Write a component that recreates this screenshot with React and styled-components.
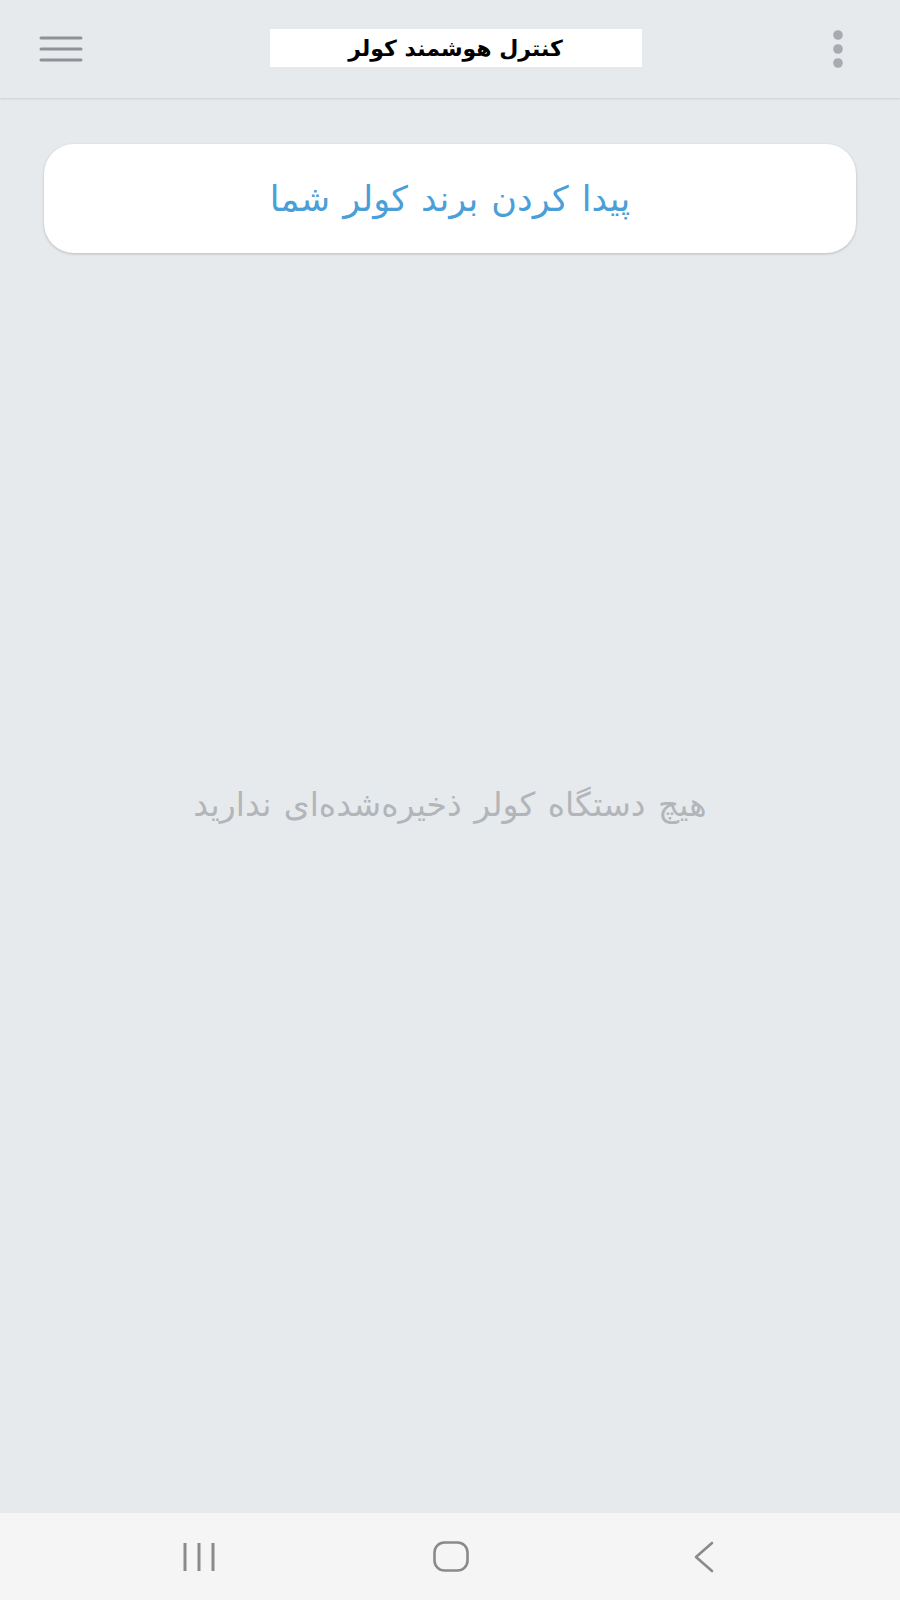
import React from "react";
import styled, { createGlobalStyle } from "styled-components";

//
// page reset
const GlobalStyle = createGlobalStyle`
  html, body {
    margin: 0;
    padding: 0;
  }
  body {
    font-family: "DejaVu Sans", "Noto Sans", sans-serif;
    background: #e7eaed;
  }
`;

const Screen = styled.div`
  width: 100%;
  height: 100vh;
  display: flex;
  flex-direction: column;
  background: #e7eaed;
  overflow: hidden;
`;

//
//          **    top bar  ***
//
const TopBar = styled.header`
  height: 98px;
  flex-shrink: 0;
  display: flex;
  align-items: center;
  justify-content: space-between;
  padding: 0 52px 0 39px;
  background: #e7eaed;
  box-shadow: 0 1px 2px rgba(0, 0, 0, 0.12);
  position: relative;
  z-index: 1;
  box-sizing: border-box;
`;

const IconButton = styled.button`
  border: none;
  background: transparent;
  padding: 0;
  margin: 0;
  width: ${(props) => props.width}px;
  height: 40px;
  display: flex;
  align-items: center;
  justify-content: center;
  cursor: pointer;
`;

const TitleBox = styled.div`
  width: 372px;
  height: 38px;
  margin-top: -2px;
  background: #ffffff;
  display: flex;
  align-items: center;
  justify-content: center;
`;

const Title = styled.h1`
  margin: 0;
  font-size: 22px;
  font-weight: 700;
  color: #000;
  direction: rtl;
`;

//
//          **    content  ***
//
const Content = styled.main`
  flex: 1;
  display: grid;
  grid-template-areas: "stack";
  min-height: 0;
`;

const BrandCard = styled.button`
  grid-area: stack;
  align-self: start;
  margin: 46px 44px 0;
  height: 109px;
  border: none;
  border-radius: 30px;
  background: #ffffff;
  box-shadow: 0 1px 3px rgba(0, 0, 0, 0.2);
  display: flex;
  align-items: center;
  justify-content: center;
  cursor: pointer;
  font-family: inherit;
`;

const CardLabel = styled.span`
  font-size: 35px;
  word-spacing: 2px;
  color: #4a9fd8;
  direction: rtl;
  margin-top: 0;
`;

const EmptyNote = styled.p`
  grid-area: stack;
  align-self: center;
  justify-self: center;
  margin: 0 0 2px;
  font-size: 33px;
  word-spacing: 2px;
  color: #b2b5b9;
  direction: rtl;
`;

//
//          **    system nav  ***
//
const NavBar = styled.nav`
  height: 87px;
  flex-shrink: 0;
  background: #f5f5f5;
  display: grid;
  grid-template-columns: repeat(3, 252px);
  padding: 0 73px;
  align-items: center;
  justify-items: center;
`;

const NavKey = styled.div`
  display: flex;
  align-items: center;
  justify-content: center;
  margin-left: ${(props) => props.shift || 0}px;
`;

const Hamburger = () => (
  <svg width="44" height="28" viewBox="0 0 44 28">
    <g stroke="#8e9196" strokeWidth="3" strokeLinecap="round">
      <line x1="2" y1="3" x2="42" y2="3" />
      <line x1="2" y1="14" x2="42" y2="14" />
      <line x1="2" y1="25" x2="42" y2="25" />
    </g>
  </svg>
);

const MoreDots = () => (
  <svg width="20" height="38" viewBox="0 0 20 38">
    <g fill="#a7aaae">
      <circle cx="10" cy="5" r="4.8" />
      <circle cx="10" cy="19" r="4.8" />
      <circle cx="10" cy="33" r="4.8" />
    </g>
  </svg>
);

const RecentsIcon = () => (
  <svg width="34" height="30" viewBox="0 0 34 30">
    <g stroke="#8a8a8a" strokeWidth="3">
      <line x1="3" y1="1" x2="3" y2="29" />
      <line x1="17" y1="1" x2="17" y2="29" />
      <line x1="31" y1="1" x2="31" y2="29" />
    </g>
  </svg>
);

const HomeIcon = () => (
  <svg width="36" height="31" viewBox="0 0 36 31">
    <rect
      x="1.5"
      y="1.5"
      width="33"
      height="28"
      rx="10"
      fill="none"
      stroke="#8a8a8a"
      strokeWidth="2.6"
    />
  </svg>
);

const BackIcon = () => (
  <svg width="22" height="32" viewBox="0 0 22 32">
    <polyline
      points="19,2 3,16 19,30"
      fill="none"
      stroke="#8a8a8a"
      strokeWidth="2.6"
      strokeLinecap="round"
      strokeLinejoin="round"
    />
  </svg>
);

const App = () => {
  return (
    <Screen>
      <GlobalStyle />
      <TopBar>
        <IconButton width={44}>
          <Hamburger />
        </IconButton>
        <TitleBox>
          <Title>کنترل هوشمند کولر</Title>
        </TitleBox>
        <IconButton width={20}>
          <MoreDots />
        </IconButton>
      </TopBar>

      <Content>
        <BrandCard>
          <CardLabel>پیدا کردن برند کولر شما</CardLabel>
        </BrandCard>
        <EmptyNote>هیچ دستگاه کولر ذخیره‌شده‌ای ندارید</EmptyNote>
      </Content>

      <NavBar>
        <NavKey>
          <RecentsIcon />
        </NavKey>
        <NavKey>
          <HomeIcon />
        </NavKey>
        <NavKey shift={2}>
          <BackIcon />
        </NavKey>
      </NavBar>
    </Screen>
  );
};

export default App;
